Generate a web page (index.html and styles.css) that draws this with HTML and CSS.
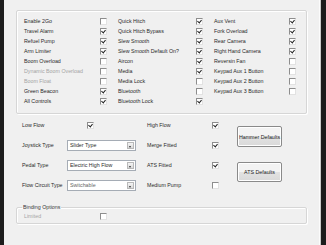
FILE: index.html
```html
<!DOCTYPE html>
<html lang="en">
<head>
  <meta charset="utf-8">
  <title>Machine Options</title>
  <link rel="stylesheet" href="styles.css">
</head>
<body>
  <div class="frame">
    <div class="edge edge-left"></div>
    <main class="dialog">
      <!-- feature options -->
      <section class="group options">
        <span class="lbl">Enable 2Go</span><span class="cb"></span>
        <span class="lbl">Quick Hitch</span><span class="cb on"></span>
        <span class="lbl">Aux Vent</span><span class="cb on"></span>

        <span class="lbl">Travel Alarm</span><span class="cb on"></span>
        <span class="lbl">Quick Hitch Bypass</span><span class="cb on"></span>
        <span class="lbl">Fork Overload</span><span class="cb on"></span>

        <span class="lbl">Refuel Pump</span><span class="cb on"></span>
        <span class="lbl">Slew Smooth</span><span class="cb on"></span>
        <span class="lbl">Rear Camera</span><span class="cb on"></span>

        <span class="lbl">Arm Limiter</span><span class="cb on"></span>
        <span class="lbl">Slew Smooth Default On?</span><span class="cb on"></span>
        <span class="lbl">Right Hand Camera</span><span class="cb on"></span>

        <span class="lbl">Boom Overload</span><span class="cb"></span>
        <span class="lbl">Aircon</span><span class="cb on"></span>
        <span class="lbl">Reversin Fan</span><span class="cb"></span>

        <span class="lbl off">Dynamic Boom Overload</span><span class="cb"></span>
        <span class="lbl">Media</span><span class="cb on"></span>
        <span class="lbl">Keypad Aux 1 Button</span><span class="cb"></span>

        <span class="lbl off">Boom Float</span><span class="cb"></span>
        <span class="lbl">Media Lock</span><span class="cb"></span>
        <span class="lbl">Keypad Aux 2 Button</span><span class="cb"></span>

        <span class="lbl">Green Beacon</span><span class="cb on"></span>
        <span class="lbl">Bluetooth</span><span class="cb"></span>
        <span class="lbl">Keypad Aux 3 Button</span><span class="cb"></span>

        <span class="lbl">All Controls</span><span class="cb on"></span>
        <span class="lbl">Bluetooth Lock</span><span class="cb on"></span>
      </section>

      <!-- hydraulics -->
      <section class="hydraulics">
        <div class="hyd-grid">
          <span class="lbl">Low Flow</span>
          <span class="cell"><span class="cb on low-cb"></span></span>
          <span></span>
          <span class="lbl">High Flow</span>
          <span class="cb on"></span>

          <span class="lbl">Joystick Type</span>
          <span class="select"><span class="value">Slider Type</span><span class="arrow"></span></span>
          <span></span>
          <span class="lbl">Merge Fitted</span>
          <span class="cb on"></span>

          <span class="lbl">Pedal Type</span>
          <span class="select"><span class="value">Electric High Flow</span><span class="arrow"></span></span>
          <span></span>
          <span class="lbl">ATS Fitted</span>
          <span class="cb on"></span>

          <span class="lbl">Flow Circuit Type</span>
          <span class="select"><span class="value dim">Switchable</span><span class="arrow"></span></span>
          <span></span>
          <span class="lbl">Medium Pump</span>
          <span class="cb"></span>
        </div>
        <div class="defaults">
          <button class="btn btn-hammer">Hammer Defaults</button>
          <button class="btn btn-ats">ATS Defaults</button>
        </div>
      </section>

      <fieldset class="binding">
        <legend>Binding Options</legend>
        <div class="binding-row">
          <span class="lbl off">Limited</span><span class="cb"></span>
        </div>
      </fieldset>
    </main>
    <div class="edge edge-right"></div>
  </div>
</body>
</html>
```

FILE: styles.css
```css
html, body {
  margin: 0; padding: 0;
  background: #f0f0f0;
  color: #2a2a2a;
  font-family: 'Liberation Sans', Arial, sans-serif;
  font-size: 5.3px;
  width: 326px; height: 245px;
  overflow: hidden;
}
.frame {
  display: flex;
  height: 245px;
}
.edge {
  background: #1c1c1c;
  flex: none;
}
.edge-left { width: 4px; }
.edge-right { width: 5px; box-shadow: -1px 0 0 #c9c9c9, -2px 0 0 #fbfbfb; }
.dialog {
  flex: 1;
  display: flex;
  flex-direction: column;
}

/* group boxes */
.group {
  border: 1px solid #d6d6d6;
  box-shadow: 1px 1px 0 #fff inset, 1px 1px 0 #fff;
  border-radius: 2px;
}
.options {
  margin: 10px 0 0 12px;
  width: 291px;
  height: 104px;
  box-sizing: border-box;
  padding: 5px 0 0 7px;
  display: grid;
  grid-template-columns: 76px 18px 78px 18px 75px 7px;
  grid-auto-rows: 10px;
  align-items: center;
}
.lbl { white-space: nowrap; line-height: 10px; }
.lbl.off { color: #a4a4a4; }

/* checkbox */
.cb {
  width: 7px; height: 7px;
  box-sizing: border-box;
  background: #fff;
  border: 1px solid;
  border-color: #8d8d8d #e2e2e2 #e2e2e2 #8d8d8d;
  position: relative;
}
.cb.on::after {
  content: '';
  position: absolute;
  left: 1px; top: 0px;
  width: 2px; height: 3px;
  border: solid #222;
  border-width: 0 1px 1px 0;
  transform: rotate(40deg);
}

/* hydraulics */
.hydraulics {
  display: flex;
  margin-top: 1px;
  padding-left: 18px;
}
.hyd-grid {
  display: grid;
  grid-template-columns: 45px 69px 11px 65px 25px;
  grid-auto-rows: 20px;
  align-items: center;
}
.cell { display: flex; }
.low-cb { margin-left: 20px; }
.select {
  display: flex;
  height: 11px;
  box-sizing: border-box;
  border: 1px solid #a5acb5;
  background: #fff;
}
.select .value {
  flex: 1;
  padding-left: 2px;
  line-height: 9px;
  white-space: nowrap;
  overflow: hidden;
}
.select .value.dim { color: #666; }
.select .arrow {
  width: 5px;
  margin: 1px;
  background: linear-gradient(#f4f4f4, #dadada);
  border: 1px solid #b8b8b8;
  box-sizing: content-box;
  position: relative;
}
.select .arrow::after {
  content: '';
  position: absolute;
  left: 1px; top: 3px;
  border: 1.5px solid transparent;
  border-top: 2px solid #333;
  border-bottom: 0;
}
.defaults {
  display: flex;
  flex-direction: column;
  padding-top: 11px;
  gap: 15px;
}
.btn {
  width: 45px;
  height: 21px;
  padding: 0;
  font: inherit;
  color: #222;
  background: linear-gradient(#f3f3f3 50%, #e2e2e2 51%, #d9d9d9);
  border: 1px solid #8a8a8a;
  border-radius: 2px;
  box-shadow: 0 0 0 1px #fff inset;
}
.btn-ats { height: 20px; }

/* binding options */
.binding {
  margin: 9px 0 0 12px;
  width: 291px;
  box-sizing: border-box;
  padding: 1px 0 2px 7px;
  border: 1px solid #d6d6d6;
  border-radius: 2px;
  box-shadow: 1px 1px 0 #fff inset, 1px 1px 0 #fff;
}
.binding legend {
  margin-left: -2px;
  padding: 0 1px;
  line-height: 6px;
  color: #333;
}
.binding-row {
  display: grid;
  grid-template-columns: 76px 7px;
  grid-auto-rows: 10px;
  align-items: center;
}
```
